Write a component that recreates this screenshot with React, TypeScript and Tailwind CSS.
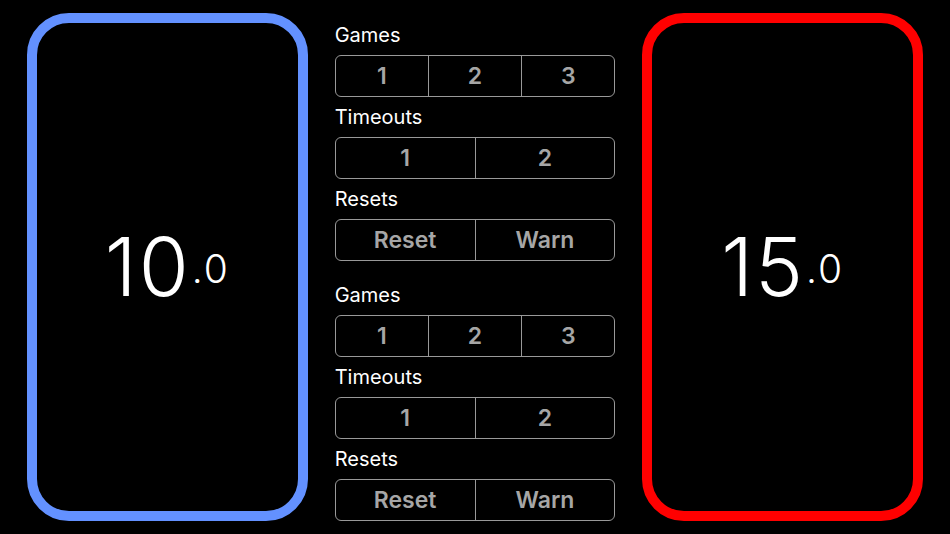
import React from "react";

const font = { fontFamily: "Inter, 'Noto Sans', sans-serif" };

function ScoreBox({ whole, color }: { whole: string; color: string }) {
  return (
    <div
      className={`flex-1 flex items-center justify-center border-[10px] rounded-[42px] ${color}`}
    >
      <div className="text-white font-light leading-none whitespace-nowrap">
        <span className="text-[81px] tracking-[2px]">{whole}</span>
        <span className="text-[39px] tracking-[2px] ml-[1px] align-[13px]">.0</span>
      </div>
    </div>
  );
}

function Segmented({ items }: { items: string[] }) {
  return (
    <div className="h-[42px] flex border-[1.5px] border-[#999999] rounded-[6px] overflow-hidden">
      {items.map((item, i) => (
        <div
          key={i}
          className={`flex-1 flex items-center justify-center text-[23px] font-semibold text-[#a6a6a6] ${
            i > 0 ? "border-l-[1.5px] border-[#999999]" : ""
          }`}
        >
          {item}
        </div>
      ))}
    </div>
  );
}

function Section({ label, items }: { label: string; items: string[] }) {
  return (
    <div>
      <div className="h-10 flex items-center text-[20px] text-white leading-none">{label}</div>
      <Segmented items={items} />
    </div>
  );
}

function ControlGroup() {
  return (
    <div>
      <Section label="Games" items={["1", "2", "3"]} />
      <Section label="Timeouts" items={["1", "2"]} />
      <Section label="Resets" items={["Reset", "Warn"]} />
    </div>
  );
}

export default function App() {
  return (
    <div
      className="w-[950px] h-[534px] bg-black flex gap-[27px] px-[27px] overflow-hidden"
      style={font}
    >
      <div className="flex-1 flex py-[13px]">
        <ScoreBox whole="10" color="border-[#6391ff]" />
      </div>
      <div className="flex-1 flex flex-col gap-[14px] pt-[15px]">
        <ControlGroup />
        <ControlGroup />
      </div>
      <div className="flex-1 flex py-[13px]">
        <ScoreBox whole="15" color="border-[#ff0000]" />
      </div>
    </div>
  );
}
